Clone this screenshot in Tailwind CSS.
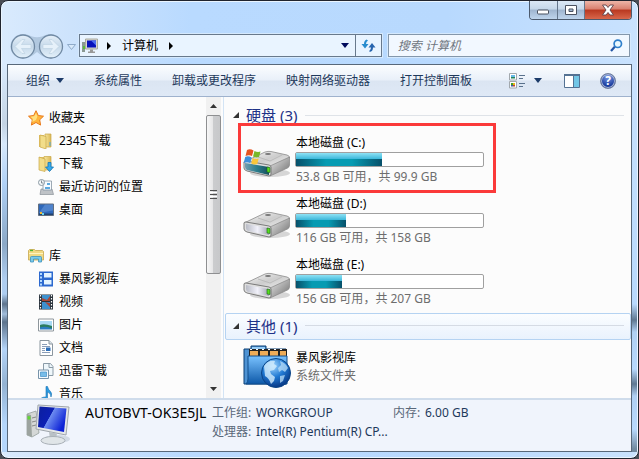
<!DOCTYPE html>
<html lang="zh-CN">
<head>
<meta charset="utf-8">
<meta name="viewport" content="width=device-width, initial-scale=1">
<title>计算机</title>
<script src="https://cdn.jsdelivr.net/npm/@tailwindcss/browser@4"></script>
</head>
<body class="h-screen overflow-hidden bg-[#4a4d55] font-['Noto_Sans','Noto_Sans_CJK_SC',sans-serif] text-[12px] leading-[18px] text-black">
<svg class="absolute size-0" aria-hidden="true">
  <defs>
    <linearGradient id="top" x1="0" y1="0" x2="1" y2="1"><stop stop-color="#fafafa"/><stop offset=".5" stop-color="#cdcdcd"/><stop offset="1" stop-color="#efefef"/></linearGradient>
    <linearGradient id="side" x1="0" y1="0" x2="1" y2="1"><stop stop-color="#e9e9e9"/><stop offset="1" stop-color="#6d6d6d"/></linearGradient>
    <linearGradient id="front" x1="0" y1="0" x2="1" y2="0"><stop stop-color="#b9bcc6"/><stop offset=".5" stop-color="#f1f1fa"/><stop offset="1" stop-color="#a3a4b2"/></linearGradient>
    <linearGradient id="teal" x1="0" y1="0" x2="1" y2="0"><stop stop-color="#6f9db0"/><stop offset=".5" stop-color="#2b7d8c"/><stop offset="1" stop-color="#174f5c"/></linearGradient>
    <linearGradient id="folder" x1="0" y1="0" x2="1" y2="0"><stop stop-color="#f7e8a0"/><stop offset="1" stop-color="#dcb856"/></linearGradient>
    <linearGradient id="screen" x1="0" y1="0" x2="1" y2=".5"><stop stop-color="#0b1f9e"/><stop offset=".48" stop-color="#0c1fb4"/><stop offset=".5" stop-color="#6d8cf0"/><stop offset="1" stop-color="#0d22d6"/></linearGradient>
    <linearGradient id="blue" x1="0" y1="0" x2="0" y2="1"><stop stop-color="#79c2ff"/><stop offset="1" stop-color="#0d58a8"/></linearGradient>
    <radialGradient id="globe" cx=".4" cy=".25" r=".8"><stop stop-color="#9fd6ff"/><stop offset=".5" stop-color="#1f78d2"/><stop offset="1" stop-color="#04307c"/></radialGradient>
    <linearGradient id="orb" x1="0" y1="0" x2="0" y2="1"><stop stop-color="#e6f0f9"/><stop offset=".5" stop-color="#c6d9ea"/><stop offset="1" stop-color="#e4f1fb"/></linearGradient>
    <symbol id="drive" viewBox="0 0 48 30">
      <ellipse cx="27" cy="24" rx="20" ry="4" fill="#000" opacity=".15"/>
      <path d="M1 13 22 3q3-1 6-.5L44 6q3 1 2.500 3L28 18 4 15z" fill="url(#top)" stroke="#8b8b8b" stroke-width=".8"/>
      <path d="M27 17 46.500 8v8q0 2-2 3L27 27z" fill="url(#side)" stroke="#858585" stroke-width=".7"/>
      <path d="M1 13q0-1 2-1l23 4q2 .500 2 2v7q0 2-2 2L4 22q-3-1-3-3z" fill="#dedede" stroke="#707070" stroke-width=".9"/>
      <ellipse cx="25" cy="5" rx="3" ry="1" fill="#777"/><path d="M15 8l12 4 12-6" fill="none" stroke="#bbb"/>
    </symbol>
  </defs>
</svg>

<div class="flex h-full flex-col rounded-lg border border-[#20242e] bg-[#b8d9fe] bg-[linear-gradient(90deg,#d9eafd_0,#cde3fc_70px,#b9daff_190px,#b8d9fe_70%,#c9e2fe_100%)] shadow-[inset_0_0_0_1px_#eaf5ff]">
  <header>
    <div class="flex h-[33px] items-start justify-end pr-[6px]">
      <div class="flex h-[19px] overflow-hidden rounded-b border border-t-0 border-[#4c5a6d]">
        <button aria-label="最小化" class="flex w-7 items-center justify-center border-r border-[#64768c] bg-[linear-gradient(#dbe8f6_0,#c5d7ea_45%,#9fb5cf_50%,#bed4ec_100%)]"><svg width="13" height="8" class="mt-1" aria-hidden="true"><rect x=".5" y="2" width="11" height="4" rx="1" fill="#fff" stroke="#4b5261"/></svg></button>
        <button aria-label="最大化" class="flex w-[27px] items-center justify-center border-r border-[#64768c] bg-[linear-gradient(#dbe8f6_0,#c5d7ea_45%,#9fb5cf_50%,#bed4ec_100%)]"><svg width="12" height="11" aria-hidden="true"><path fill-rule="evenodd" d="M.5.5h11v9H.500zM4 4v2.500h4V4z" fill="#fff" stroke="#4b5261"/></svg></button>
        <button aria-label="关闭" class="flex w-[46px] items-center justify-center bg-[linear-gradient(#eeb5a8_0,#d9806f_45%,#b93820_50%,#d8674b_100%)]"><svg width="14" height="12" viewBox="0 0 14 12" aria-hidden="true"><path d="M1.500 1h3.500l2 2.500L9 1h3.500L9 6l3.500 5H9L7 8.500 5 11H1.500L5 6z" fill="#fff" stroke="#5d4148" stroke-width=".9"/></svg></button>
      </div>
    </div>
    <nav class="flex h-[30px] items-start pr-2 pl-2" aria-label="地址">
      <div class="flex w-[70px] shrink-0 items-center">
        <svg width="70" height="26" viewBox="0 0 70 26" aria-hidden="true">
          <path d="M14 0q5 0 9 2.500 5 1.500 10 0Q37 0 42 0a13 13 0 0 1 0 25q-6 0-14-7-8 7-14 7A12.500 12.500 0 0 1 14 0z" fill="#a5bdd5" opacity=".75"/>
          <circle cx="14" cy="12.500" r="11.500" fill="url(#orb)" stroke="#7089a3" stroke-width="1.300"/><circle cx="42" cy="12.500" r="11.500" fill="url(#orb)" stroke="#7089a3" stroke-width="1.300"/>
          <path d="M6 12.500 13 5.500h3l-3.500 5H22v4h-9.500l3.500 5h-3z" fill="#e6f1fa" stroke="#bfd2e3" stroke-width=".7"/>
          <path d="M50 12.500 43 5.500h-3l3.500 5H34v4h9.500l-3.500 5h3z" fill="#e6f1fa" stroke="#bfd2e3" stroke-width=".7"/>
          <path d="M58.500 10.500h8l-4 5z" fill="#d8e9fa" stroke="#8fabca"/>
        </svg>
      </div>
      <div class="flex h-[23px] min-w-0 flex-1 items-center border border-[#68798c] bg-[#e9f4ff] shadow-[0_0_0_1px_#d5e9fd]">
        <svg class="ml-[2px] shrink-0" width="16" height="16" viewBox="0 0 16 16" aria-hidden="true"><path d="M0 4h3v10H0z" fill="#8b9993"/><path d="M1 8h2v3H1z" fill="#58bb3c"/><path d="M3.500 1h12v10h-12z" fill="#d6d6cf" stroke="#a9aaa0"/><path d="M5 2.500h9v7H5z" fill="#0711bb"/><path d="M9 2.500h5v5z" fill="#4c6cf0"/><path d="M8 11.500h3v2h2v1.500H6v-1.500h2z" fill="#999"/></svg>
        <svg class="mr-[11px] ml-[9px]" width="4" height="8" aria-hidden="true"><path d="M0 0v8l4-4z"/></svg>
        <button>计算机</button>
        <svg class="ml-[11px]" width="4" height="8" aria-hidden="true"><path d="M0 0v8l4-4z"/></svg>
        <button aria-label="历史记录" class="ml-auto flex h-full w-5 items-center justify-center"><svg width="8" height="5" aria-hidden="true"><path d="M0 0h8L4 5z" fill="#000a5c"/></svg></button>
        <button aria-label="刷新" class="flex h-full w-[26px] items-center justify-center border-l border-[#68798c]"><svg width="15" height="14" viewBox="0 0 15 14" aria-hidden="true"><path d="M5.500.500Q3 1.500 3 5H.500L4 9.500 7.500 5H5q0-2.500 2-3.500z" fill="#278cce"/><path d="M8.500 13Q12 12.500 12 8.500h2.500L11 4 7.500 8.500H10q0 2-1.500 3z" fill="#2865ae"/></svg></button>
      </div>
      <label class="ml-[6px] flex h-[23px] w-[39%] items-center border border-[#8497ab] bg-[#f2f8ff] px-[6px] pl-[9px] shadow-[0_0_0_1px_#d5e9fd]">
        <span class="sr-only">搜索</span>
        <input type="text" placeholder="搜索 计算机" class="h-full min-w-0 flex-1 bg-transparent italic outline-none placeholder:text-[#6f7680]">
        <svg width="13" height="13" viewBox="0 0 13 13" aria-hidden="true"><path d="M1 12l4-4.500" stroke="#2455a5" stroke-width="2.200"/><circle cx="7.800" cy="4.800" r="3.700" fill="#e9f8ff" stroke="#2f7fcb" stroke-width="1.700"/></svg>
      </label>
    </nav>
  </header>

  <div class="flex min-h-0 flex-1 pb-[6px]">
    <div class="mx-px -mr-px w-[6px] bg-[linear-gradient(#d9eafd_0,#c4d4e4_60px,#d7e8fa_80px,#b0d1f6_120px,#8ba8c6_180px,#afcdef_215px,#adcdf1_230px,#5d738c_240px,#a1bddb_250px,#5d738c_258px,#b4d4f8_285px,#93b2d2_320px,#b5d6fb_360px)]"></div>
    <div class="flex min-w-0 flex-1 flex-col border border-[#58687a] bg-[#fcfcfc]">
      <div role="toolbar" aria-label="命令栏" class="flex h-8 shrink-0 items-center border-b border-[#9fb2cd] bg-[linear-gradient(#fbfdff_0,#e9f0f9_48%,#dbe5f2_52%,#dfe9f6_100%)] pr-[15px] pl-[18px] text-[#1e395b]">
        <button class="flex items-center gap-[6px]">组织<svg width="8" height="5" aria-hidden="true"><path d="M0 0h8L4 5z" fill="#1c3b69"/></svg></button>
        <div class="ml-[30px] flex gap-[30px] whitespace-nowrap"><button>系统属性</button><button>卸载或更改程序</button><button>映射网络驱动器</button><button>打开控制面板</button></div>
        <div class="ml-auto flex items-center">
          <button aria-label="更改视图"><svg width="16" height="16" viewBox="0 0 16 16" aria-hidden="true"><path d="M.5.500h7v6.500h-7zM.5 8.500h7V15h-7z" fill="#fff" stroke="#a2a8ad"/><path d="M2 2h4v2H2z" fill="#66b9e8"/><path d="M2 4h4v1.500H2z" fill="#24845f"/><path d="M2 10h2v2H2z" fill="#449b27"/><path d="M4 10h2v2H4z" fill="#e5b716"/><path d="M2 12h2v1.500H2z" fill="#385ca8"/><path d="M4 12h2v1.500H4z" fill="#bd4334"/><path d="M10 2.500h6M10 5.500h4M10 10.500h6M10 13.500h4" stroke="#59718c"/></svg></button>
          <button aria-label="更多选项" class="ml-[9px]"><svg width="8" height="5" aria-hidden="true"><path d="M0 0h8L4 5z" fill="#1c3b69"/></svg></button>
          <button aria-label="显示预览窗格" class="ml-[22px]"><svg width="16" height="14" aria-hidden="true"><path d="M.5.5h15v13H.5z" fill="#fff" stroke="#547293"/><path d="M0 1h16" stroke="#547293" stroke-width="2"/><path d="M10 2h5v11h-5z" fill="#72c6e6"/><path d="M9.500 2v12" stroke="#547293"/></svg></button>
          <button aria-label="帮助" class="ml-5 flex size-4 items-center justify-center rounded-full border border-[#6f7e9d] bg-[radial-gradient(circle_at_50%_20%,#7f9ee8,#183a9c_70%)] text-[12px] leading-none font-bold text-white shadow-[inset_0_0_0_1px_#a7b4d4]">?</button>
        </div>
      </div>

      <div class="flex min-h-0 flex-1">
        <aside class="flex w-[216px] shrink-0 border-r border-[#d3e4f5]">
          <nav class="min-w-0 flex-1 overflow-hidden pt-[9px] pl-5" aria-label="导航窗格">
            <section class="mb-[23px]">
              <a href="#" class="flex h-[23px] items-center gap-[5px]"><svg width="16" height="16" viewBox="0 0 16 16" aria-hidden="true"><path d="M8 .7l2.300 4.800 5.200.7-3.800 3.600.9 5.300L8 12.500l-4.600 2.600.9-5.300L.5 6.200l5.200-.7z" fill="#ffb53c" stroke="#e8791b"/><path d="M8 3l1.400 3.500L8 10 4 12l1-3-2.500-2.300 3.700-.5z" fill="#ffe07e"/></svg>收藏夹</a>
              <ul class="pl-[10px]">
                <li><a href="#" class="flex h-[23px] items-center gap-[5px]"><svg width="16" height="16" viewBox="0 0 16 16" aria-hidden="true"><path d="M1 2h5v12H1z" fill="#e4c468"/><path d="M7 1h6v13H7z" fill="url(#folder)" stroke="#c9a747" stroke-width=".7"/><path d="M2 2l6 1.500V16l-6-2z" fill="#f2dd8a" stroke="#c9a747" stroke-width=".7"/><path d="M12 9v4" stroke="#4aa7e0"/></svg>2345下载</a></li>
                <li><a href="#" class="flex h-[23px] items-center gap-[5px]"><svg width="16" height="16" viewBox="0 0 16 16" aria-hidden="true"><path d="M1 1h5v13H1z" fill="#e4c468"/><path d="M6 .5h7V14H6z" fill="url(#folder)" stroke="#c9a747" stroke-width=".7"/><path d="M1 1l6 2v12.500L1 14z" fill="#f2dd8a" stroke="#c9a747" stroke-width=".7"/><path d="M10 6.500h3V11h2.500l-4 4.500-4-4.500H10z" fill="#35a9ec" stroke="#1376b8" stroke-width=".8"/></svg>下载</a></li>
                <li><a href="#" class="flex h-[23px] items-center gap-[5px]"><svg width="16" height="16" viewBox="0 0 16 16" aria-hidden="true"><path d="M3 10h11l1.500 5.500H2z" fill="#bfc3c7" stroke="#8b9299" stroke-width=".7"/><path d="M5 2h8.500v9H5z" fill="#f7fbff" stroke="#8795a2" stroke-width=".8"/><path d="M9 4h3v2H9zM7 8h5v2H7z" fill="#5da8df"/><circle cx="3.500" cy="3.500" r="3" fill="#f5f8fa" stroke="#8b98a3"/><path d="M3.500 1.500v2.500h2" stroke="#57636e" fill="none" stroke-width=".7"/></svg>最近访问的位置</a></li>
                <li><a href="#" class="flex h-[23px] items-center gap-[5px]"><svg width="16" height="16" viewBox="0 0 16 16" aria-hidden="true"><path d="M.5 2h15v11.500H.5z" fill="#2f68ba" stroke="#626f80"/><path d="M7 2.500h8v6L1 11z" fill="#6f9ddd" opacity=".5"/><path d="M1 11.500h14v1.500H1z" fill="#23436f"/><path d="M2 10h2v2H2z" fill="#f0ba36"/><path d="M4 11h2v2H4z" fill="#64d4f0"/></svg>桌面</a></li>
              </ul>
            </section>
            <section>
              <a href="#" class="flex h-[23px] items-center gap-[5px]"><svg width="16" height="16" viewBox="0 0 16 16" aria-hidden="true"><path d="M.5 2.500l1-1h5l1 1h7l1 1V12H.5z" fill="#f1d982" stroke="#c6a74c" stroke-width=".8"/><path d="M2 2.500h3" stroke="#53b435" stroke-width="1.300"/><path d="M1 5.500h14" stroke="#fff4bf"/><path d="M2.500 14V9.500q0-1 1-1h9q1 0 1 1V14h-3v-3h-5v3z" fill="#79caeb" stroke="#3e92bc" stroke-width=".8"/></svg>库</a>
              <ul class="pl-[10px]">
                <li><a href="#" class="flex h-[23px] items-center gap-[5px]"><svg width="16" height="16" viewBox="0 0 16 16" aria-hidden="true"><path d="M1 .5h14v15H1z" fill="#2c69cf"/><path d="M6 2h7.500v4.500H6zM6 9h7.500v4.500H6z" fill="#e5f5ff"/><path d="M2 2h2v2H2zM2 5.500h2v2H2zM2 9h2v2H2zM2 12.500h2v2H2z" fill="#b5dcff"/></svg>暴风影视库</a></li>
                <li><a href="#" class="flex h-[23px] items-center gap-[5px]"><svg width="16" height="16" viewBox="0 0 16 16" aria-hidden="true"><path d="M1 .5h14v15H1z" fill="#29323b"/><path d="M4 1h8v6H4zM4 8h8v7H4z" fill="#3d91cf"/><path d="M4 4l5 2 3-4v5H4zM7 8l5 1v4z" fill="#aa4634"/><path d="M2.500 1v15M13.500 1v15" stroke="#fff" stroke-width="1.200" stroke-dasharray="1.500 1.500"/></svg>视频</a></li>
                <li><a href="#" class="flex h-[23px] items-center gap-[5px]"><svg width="16" height="16" viewBox="0 0 16 16" aria-hidden="true"><path d="M.5 2h15v12H.5z" fill="#fff" stroke="#8e969c"/><path d="M2 4h12v5H2z" fill="#a8d9f5"/><path d="M2 8q4-2 12 1v3H2z" fill="#2b7d60"/><path d="M2 10.500q6-2 12 1v1H2z" fill="#297cc1"/></svg>图片</a></li>
                <li><a href="#" class="flex h-[23px] items-center gap-[5px]"><svg width="16" height="16" viewBox="0 0 16 16" aria-hidden="true"><path d="M2 .5h9l3.500 3.500v11.500H2z" fill="#fff" stroke="#8b969f"/><path d="M11 .5V4h3.500" fill="#dce5ea" stroke="#8b969f"/><path d="M4 4.500h5M4 6.500h8M4 8.500h3M4 10.500h3M4 12.500h8" stroke="#8b9eb8"/><path d="M8 7.500h4.500v3.500H8z" fill="#2c6eb9"/></svg>文档</a></li>
                <li><a href="#" class="flex h-[23px] items-center gap-[5px]"><svg width="16" height="16" viewBox="0 0 16 16" aria-hidden="true"><path d="M5.500.5h7l2.500 3v9H5.500z" fill="#eff7fb" stroke="#8b9ba7"/><path d="M11 .5v4h4" fill="none" stroke="#8b9ba7"/><path d="M.5 7h10v8.500H.5z" fill="#f6fbff" stroke="#7894aa"/><path d="M2.500 9h6v4.500h-6z" fill="#78bde9" stroke="#438fc5" stroke-width=".7"/></svg>迅雷下载</a></li>
                <li><a href="#" class="flex h-[23px] items-center gap-[5px]"><svg width="16" height="16" viewBox="0 0 16 16" aria-hidden="true"><path d="M8 .5h1.500q.5 3 3 5 2 2 .5 5.500 0-4-3.500-5v6q-.5 3-4 3.500-3 0-3-2 .5-2.500 5.500-2.500z" fill="#2c9ce0" stroke="#1770b3" stroke-width=".6"/></svg>音乐</a></li>
              </ul>
            </section>
          </nav>
          <div class="mr-[2px] flex w-[15px] shrink-0 flex-col bg-[#f1f1f1]" aria-hidden="true">
            <div class="flex h-[18px] items-center justify-center"><svg width="7" height="4"><path d="M0 4h7L3.500 0z" fill="#333"/></svg></div>
            <div class="flex flex-[158] flex-col items-center justify-center gap-px rounded-xs border border-[#8e8f91] bg-[linear-gradient(90deg,#f7f7f7_0,#e6e6e7_45%,#cbccce_50%,#c7c8ca_100%)]">
              <i class="h-px w-[7px] bg-[#505050]"></i><i class="h-px w-[7px] bg-white"></i><i class="h-px w-[7px] bg-[#505050]"></i><i class="h-px w-[7px] bg-white"></i><i class="h-px w-[7px] bg-[#505050]"></i>
            </div>
            <div class="flex-[107]"></div>
            <div class="flex h-[18px] items-center justify-center"><svg width="7" height="4"><path d="M0 0h7L3.500 4z" fill="#333"/></svg></div>
          </div>
        </aside>

        <main class="min-w-0 flex-1 overflow-hidden pt-[5px] pl-px">
          <section>
            <h2 class="flex h-7 items-center pr-[7px] pb-[2px] pl-2 text-[15px] text-[#1e3287]"><svg class="mr-[7px]" width="6" height="6" aria-hidden="true"><path d="M0 6h6V0z" fill="#333"/></svg>硬盘 (3)<span class="ml-2 h-px flex-1 bg-[#dfe3e8]"></span></h2>
            <ul>
              <li class="relative flex h-[61px] items-center gap-1 pb-[2px] pl-[18px]">
                <div class="pointer-events-none absolute top-[-7px] left-[13px] h-[70px] w-[258px] border-3 border-[#fb3a3a]"></div>
                <svg class="mt-2 shrink-0" width="48" height="30" aria-hidden="true"><use href="#drive"/><path d="M2 14l24 4v8L4 21q-2-1-2-3z" fill="url(#teal)"/><path d="M24 18l3 .5v5l-3-.5z" fill="#58df1f" stroke="#1d601c" stroke-width=".6"/><path d="M4 1q3-1.500 6.500.500L9 7Q6 5.500 2.500 7z" fill="#e65321"/><path d="M11.500 2q3 1.500 6 .500L16 8q-3 1-6-.500z" fill="#79b829"/><path d="M2.200 8q3-1.500 6.500.500L7.200 14Q4 12.500.700 14z" fill="#3e8fdb"/><path d="M9.700 9q3 1.500 6 .500L14.200 15q-3 1-6-.500z" fill="#f9c63a"/></svg>
                <div class="w-[189px]"><h3 class="pl-px">本地磁盘 (C:)</h3>
                  <div role="meter" aria-label="本地磁盘 (C:)" aria-valuenow="46" class="h-[15px] rounded-xs border border-[#a0a0a0] bg-white"><div style="width:46%" class="h-full bg-[linear-gradient(#8fe2f5_0,#3db8da_45%,transparent_50%),linear-gradient(90deg,#07506a_0,#069bb2_35%,#069bb2_65%,#07506a_100%)]"></div></div>
                  <p class="pl-px whitespace-nowrap text-[#6d6d6d]">53.8 GB 可用<span class="font-['Noto_Sans_CJK_TC']">，</span>共 99.9 GB</p></div>
              </li>
              <li class="flex h-[61px] items-center gap-1 pb-[2px] pl-[18px]">
                <svg class="mt-2 shrink-0" width="48" height="30" aria-hidden="true"><use href="#drive"/><path d="M3 14l23 4v7L5 21q-2-1-2-3z" fill="url(#front)"/><path d="M24 18l3 .5v5l-3-.5z" fill="#58df1f" stroke="#1d601c" stroke-width=".6"/></svg>
                <div class="w-[189px]"><h3 class="pl-px">本地磁盘 (D:)</h3>
                  <div role="meter" aria-label="本地磁盘 (D:)" aria-valuenow="27" class="h-[15px] rounded-xs border border-[#a0a0a0] bg-white"><div style="width:26.500%" class="h-full bg-[linear-gradient(#8fe2f5_0,#3db8da_45%,transparent_50%),linear-gradient(90deg,#07506a_0,#069bb2_35%,#069bb2_65%,#07506a_100%)]"></div></div>
                  <p class="pl-px whitespace-nowrap text-[#6d6d6d]">116 GB 可用<span class="font-['Noto_Sans_CJK_TC']">，</span>共 158 GB</p></div>
              </li>
              <li class="flex h-[61px] items-center gap-1 pb-[2px] pl-[18px]">
                <svg class="mt-2 shrink-0" width="48" height="30" aria-hidden="true"><use href="#drive"/><path d="M3 14l23 4v7L5 21q-2-1-2-3z" fill="url(#front)"/><path d="M24 18l3 .5v5l-3-.5z" fill="#58df1f" stroke="#1d601c" stroke-width=".6"/></svg>
                <div class="w-[189px]"><h3 class="pl-px">本地磁盘 (E:)</h3>
                  <div role="meter" aria-label="本地磁盘 (E:)" aria-valuenow="25" class="h-[15px] rounded-xs border border-[#a0a0a0] bg-white"><div style="width:24.500%" class="h-full bg-[linear-gradient(#8fe2f5_0,#3db8da_45%,transparent_50%),linear-gradient(90deg,#07506a_0,#069bb2_35%,#069bb2_65%,#07506a_100%)]"></div></div>
                  <p class="pl-px whitespace-nowrap text-[#6d6d6d]">156 GB 可用<span class="font-['Noto_Sans_CJK_TC']">，</span>共 207 GB</p></div>
              </li>
            </ul>
          </section>
          <section>
            <h2 class="flex h-[27px] items-center rounded-xs border border-[#b5d3f2] bg-[linear-gradient(#fbfdff,#e9f2fd)] pr-[6px] pb-[2px] pl-[7px] text-[15px] text-[#1e3287]"><svg class="mr-[7px]" width="6" height="6" aria-hidden="true"><path d="M0 6h6V0z" fill="#333"/></svg>其他 (1)<span class="ml-2 h-px flex-1 bg-[#d5dbe4]"></span></h2>
            <div class="flex items-center gap-1 pt-[5px] pl-[18px]">
              <svg width="48" height="44" viewBox="0 0 48 44" aria-hidden="true"><path d="M1 4h7V1h15v3h20v35H1z" fill="#4f93d3" stroke="#0b3e74"/><path d="M9 2h13v3H9z" fill="#96cdf8"/><path d="M6 4h38v9H6z" fill="#222"/><path d="M7 6h8v5H7zM17 6h8v5h-8zM27 6h8v5h-8zM37 6h6v5h-6z" fill="#efac57"/><path d="M7 4.500h36" stroke="#fff" stroke-width="1.200" stroke-dasharray="2 4"/><path d="M5 11h39v28H3q2-2 2-5z" fill="url(#blue)" stroke="#124f8c"/><circle cx="33" cy="28" r="14.500" fill="url(#globe)" stroke="#0a4587"/><path d="M21 21q4-6 11-5l-1 3 3 2-3 4-4 1 1 3 4 3-1 4-3 3q-2-6-6-8z" fill="#d5edfc" opacity=".8"/><path d="M37 16q6 2 8 7l-3 4-3-2-3 2-1-4 3-3zM37 31l5-1-2 6-3 2z" fill="#bbdff8" opacity=".75"/></svg>
              <div class="pl-px"><h3>暴风影视库</h3><p class="text-[#6d6d6d]">系统文件夹</p></div>
            </div>
          </section>
        </main>
      </div>

      <footer class="flex h-[53px] shrink-0 border-t-2 border-[#cfdceb] bg-[#f0f4fc] pt-1 pl-[17px]">
        <svg class="shrink-0" width="46" height="42" viewBox="0 0 46 42" aria-hidden="true"><ellipse cx="32" cy="35" rx="13" ry="4" fill="#9ba8b6" opacity=".35"/><path d="M2 10l9-3 3 22-7 4-5-2z" fill="#d5d8d7" stroke="#96a09c" stroke-width=".8"/><path d="M2 10l4 1 1 22-5-2z" fill="#9ca39f"/><path d="M2.500 12l3 .5v3h-3z" fill="#62d736"/><path d="M7 14l4-1M7 18l4-1M7 22l4-1" stroke="#888"/><path d="M13 1l31 2-3 28-30-6z" fill="#e5e7e8" stroke="#9fa6ad"/><path d="M14.500 2.500l27 2-2.500 23.500-26-5z" fill="url(#screen)"/><path d="M24 28l8 1.500-1 5h-6z" fill="#b9c0c5"/><ellipse cx="28" cy="36.500" rx="12" ry="4" fill="#e0e5e8" stroke="#aab1b8"/></svg>
        <h1 class="ml-[14px] w-[127px] shrink-0 text-[14px] whitespace-nowrap">AUTOBVT-OK3E5JL</h1>
        <dl class="grid grid-cols-[44px_137px_32px_auto] content-start gap-y-px whitespace-nowrap">
          <dt class="text-[#5a6779]">工作组:</dt><dd class="text-[#1e395b]">WORKGROUP</dd>
          <dt class="text-[#5a6779]">内存:</dt><dd class="text-[#1e395b]">6.00 GB</dd>
          <dt class="text-[#5a6779]">处理器:</dt><dd class="text-[#1e395b]">Intel(R) Pentium(R) CP...</dd>
        </dl>
      </footer>
    </div>
    <div class="mr-px w-[5px] bg-[linear-gradient(#c9e2fe_0,#b8d9fe_240px,#5f7891_256px,#b0d0f3_268px,#b8d9fe_305px,#5f7891_320px,#b0d0f3_332px,#b8d9fe_365px,#71899f_385px)]"></div>
  </div>
</div>
</body>
</html>
